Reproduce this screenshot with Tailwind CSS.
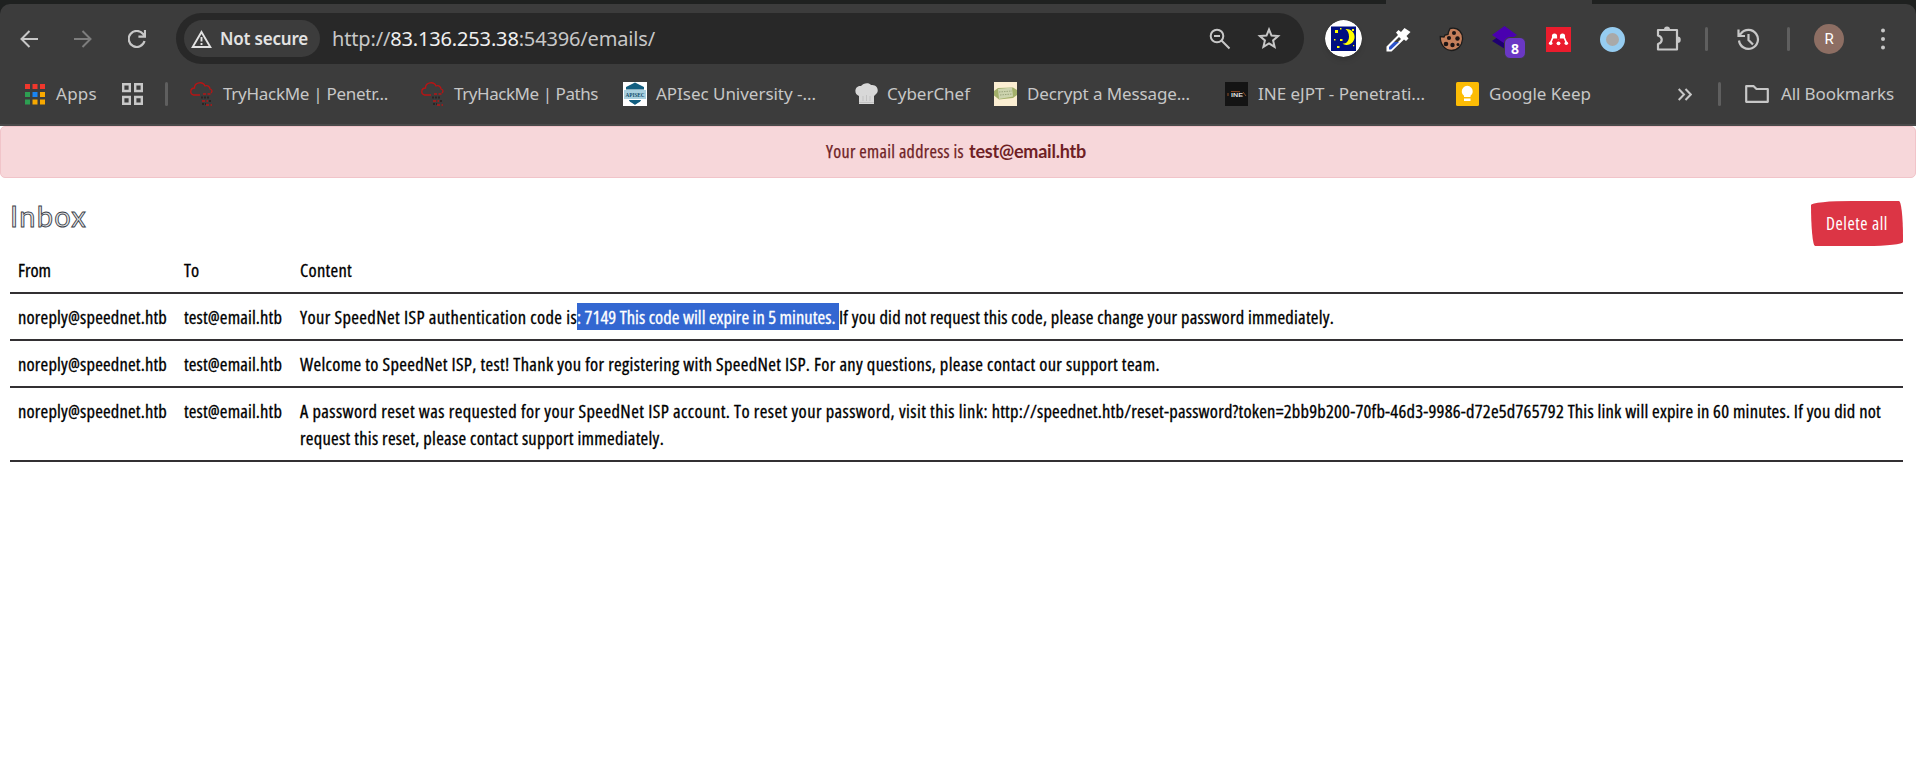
<!DOCTYPE html>
<html lang="en">
<head>
<meta charset="utf-8">
<title>Inbox</title>
<script src="https://cdn.jsdelivr.net/npm/@tailwindcss/browser@4"></script>
</head>
<body class="bg-white h-[763px] overflow-hidden">
<header class="relative h-[126px] bg-[#1f2120] pt-1 font-['Noto_Sans','Open_Sans',sans-serif] text-[#c7c7c7]">
  <div class="absolute left-[1386px] top-0 w-[206px] h-1 bg-[#3c3c3c]"></div>
  <div class="h-[122px] bg-[#3c3c3c] rounded-t-[10px] border-b-2 border-[#4a4a4a] pt-[9px]">
    <!-- Toolbar -->
    <div class="flex items-center h-[51px] pt-px">
      <svg class="ml-[20px] w-[18px] h-[18px] flex-none" viewBox="0 0 18 18" fill="none" stroke="#c7c7c7" stroke-width="2"><path d="M18 9H1.5M9.5 1 1.5 9l8 8"/></svg>
      <svg class="ml-[36px] w-[18px] h-[18px] flex-none" viewBox="0 0 18 18" fill="none" stroke="#7d7d7d" stroke-width="2"><path d="M0 9h16.500M8.500 1l8 8-8 8"/></svg>
      <svg class="ml-[36px] w-[18px] h-[18px] flex-none" viewBox="0 0 18 18" fill="none" stroke="#c7c7c7" stroke-width="2.200"><path d="M16.500 11A8 8 0 1 1 15.200 4.200L17 6.500M17 0v6.600h-6.600"/></svg>
      <div class="ml-[30px] flex items-center w-[1128px] h-[51px] rounded-full bg-[#282828] flex-none -mt-px">
        <div class="ml-2 flex items-center w-[136px] h-[37px] rounded-full bg-[#3c3c3c] flex-none">
          <svg class="ml-[7px] w-[21px] h-[18px] flex-none" viewBox="0 0 21 18" fill="none" stroke="#e3e3e3" stroke-width="1.900"><path d="M10.500 2 19.300 17H1.700z"/><path d="M10.500 7v4.500M10.500 13v2"/></svg>
          <span data-w="88" class="ml-[8px] whitespace-nowrap text-[17px] font-semibold text-[#e3e3e3]">Not secure</span>
        </div>
        <span data-w="323" class="ml-[12px] whitespace-nowrap text-[20px] text-[#c7c7c7]">http://<b class="font-normal text-[#f0f0f0]">83.136.253.38</b>:54396/emails/</span>
        <svg class="ml-auto w-[22px] h-[22px] flex-none" viewBox="0 0 22 22" fill="none" stroke="#c7c7c7" stroke-width="2"><circle cx="8" cy="8" r="6.300"/><path d="M5 8h6M12.500 12.500l8 8"/></svg>
        <svg class="ml-[26px] mr-[23px] w-[24px] h-[23px] flex-none" viewBox="0 0 24 23" fill="none" stroke="#c7c7c7" stroke-width="2"><path d="M12 2.500l2.500 6.100 6.600.500-5 4.300 1.500 6.500-5.600-3.500-5.600 3.500 1.500-6.500-5-4.300 6.600-.500z"/></svg>
      </div>
      <svg class="ml-[21px] w-[37px] h-[37px] flex-none rounded-full shadow-md -mt-px" viewBox="0 0 37 37"><circle cx="18.500" cy="18.500" r="18.500" fill="#fff"/><path fill="#000f80" d="M6 6.500h25v24.500H6z"/><path fill="#ff0" d="M21.500 10.500a8 8 0 1 1-3 14.800c4 0 6.500-2.800 6.500-7 0-3.500-1.200-6-3.500-7.800z" transform="translate(-1 -1.500)"/><path fill="#ff0" d="M10 10h3v3h-3zM9 19h1.500v1.500H9zM15 19h2.500v2H15zM15 8h1.500v1.500H15zM27 9h2v2h-2zM28 25h1.200v1.200H28zM12 26h2.500v2H12z"/></svg>
      <svg class="ml-[24px] w-[25px] h-[25px] flex-none" viewBox="0 0 25 25"><path fill="#fff" d="M.5 24.500v-5L12 8l-2-2.500L12.500 3l2.500 2 3.500-4L24.500 5l-4 4 2 2.500L20 14l-2-1.500L5.500 24.500z"/><path fill="#3c3c3c" d="M13 10l2 2-3 3H8z"/><path fill="#2b52c8" d="M8 15h5l-8 7.500H3V20z"/></svg>
      <svg class="ml-[28px] w-[25px] h-[25px] flex-none" viewBox="0 0 25 25"><path fill="#c57f5b" stroke="#1c1c1c" stroke-width="1.300" d="M11 1.500c9-2 13 5 12.500 11-.5 6-5 11-11 11S1 18 1.300 9.500L5 10l1-2 3-.500.500-2.500z"/><g fill="#1c1414"><circle cx="15" cy="6" r="2"/><circle cx="10" cy="11" r="2.100"/><circle cx="18.500" cy="11.500" r="2.200"/><circle cx="7" cy="17" r="2.300"/><circle cx="13.500" cy="18" r="2.200"/><circle cx="19" cy="17.500" r="1.500"/></g></svg>
      <div class="relative ml-[28px] w-[35px] h-[35px] flex-none mt-[8px]">
        <svg class="w-[26px] h-[24px]" viewBox="0 0 26 24"><path fill="#1f0070" d="M13 6l12 9-12 8L0 15z"/><path fill="#4a00b0" d="M12.500 0L25 9l-12.500 8.500L0 9z"/></svg>
        <span class="absolute left-[12px] top-[11px] w-[22px] h-[22px] rounded-[6px] bg-[#6a38c4] border border-[#3c3c3c] text-white text-[14px] leading-[21px] font-bold text-center">8</span>
      </div>
      <svg class="ml-[19px] w-[25px] h-[25px] flex-none" viewBox="0 0 25 25"><path fill="#eb1c2d" d="M0 0h25v25H0z"/><g fill="#fff"><circle cx="8.500" cy="9" r="2.600"/><circle cx="16.500" cy="9" r="2.600"/><circle cx="4.700" cy="16.300" r="1.800"/><circle cx="12.500" cy="16.300" r="1.900"/><circle cx="20.300" cy="16.300" r="1.800"/></g><path fill="none" stroke="#fff" stroke-width="1.700" d="M4.500 16L7.500 9l5 2.500L17.500 9l3 7"/><circle cx="12.500" cy="11" r="1.600" fill="#eb1c2d"/></svg>
      <div class="ml-[29px] w-[25px] h-[25px] flex-none rounded-full bg-[#a9a9a9] border-[6px] border-[#96ccf0]"></div>
      <svg class="ml-[31px] w-[25px] h-[25px] flex-none -mt-px" viewBox="0 0 25 25"><path fill="none" stroke="#c7c7c7" stroke-width="2.200" stroke-linejoin="round" d="M2 4h19v19.500H2v-5.500c5-1.500 5-7 0-8.500z"/><path fill="#c7c7c7" d="M8 3.500a3 3 0 0 1 6 0zM21.500 10.500a3 3 0 0 1 0 6.500z"/></svg>
      <div class="ml-[24px] w-[3px] h-6 rounded bg-[#5f5f5f] flex-none"></div>
      <svg class="ml-[29px] w-[23px] h-[23px] flex-none" viewBox="0 0 23 23" fill="none" stroke="#c7c7c7" stroke-width="2.200"><path d="M2 12.500A9.500 9.500 0 1 0 4 5.500L1.500 8M1.500 1.500V8H8M11.500 6v6l4.500 4.500"/></svg>
      <div class="ml-[27px] w-[3px] h-6 rounded bg-[#5f5f5f] flex-none"></div>
      <div class="ml-[24px] w-[30px] h-[30px] rounded-full bg-[#8d6e63] text-white text-[15px] leading-[30px] text-center font-['Roboto',sans-serif] flex-none">R</div>
      <svg class="ml-[37px] w-[4px] h-[22px] flex-none" viewBox="0 0 4 22" fill="#c7c7c7"><circle cx="2" cy="2.500" r="2"/><circle cx="2" cy="11" r="2"/><circle cx="2" cy="19.500" r="2"/></svg>
    </div>
    <!-- Bookmarks bar -->
    <div class="flex items-center h-[60px] text-[17px] whitespace-nowrap [&>*]:flex-none">
      <svg class="ml-[25px] w-[20px] h-[21px]" viewBox="0 0 20 21"><path fill="#f0372c" d="M0 0h5v5H0zM7.500 0h5v5h-5zM15 0h5v5h-5z"/><path fill="#2d9f52" d="M0 8h5v5H0zM0 15.500h5v5H0z"/><path fill="#1a84f2" d="M7.500 8h5v5h-5z"/><path fill="#f8a800" d="M15 8h5v5h-5zM7.500 15.500h5v5h-5zM15 15.500h5v5h-5z"/></svg>
      <span data-w="41" class="ml-[11px]">Apps</span>
      <svg class="ml-[25px] w-[21px] h-[22px]" viewBox="0 0 21 22" fill="none" stroke="#c7c7c7" stroke-width="2.400"><path d="M1.200 1.200h6.600v6.800H1.200zM13.200 1.200h6.600v6.800h-6.600zM1.200 14h6.600v6.800H1.200zM13.200 14h6.600v6.800h-6.600z"/></svg>
      <div class="ml-[22px] w-[3px] h-6 rounded bg-[#5f5f5f]"></div>
      <svg class="ml-[22px] w-[24px] h-[24px]" viewBox="0 0 24 24" fill="none" stroke="#b81414" stroke-width="1.300"><path d="M10 13H3.500C-.5 12 0 6 4.500 6 4.500 0 13-1 15 4c3-1 5 1 5 3 3 1 2 3 1 4"/><path stroke-width="1.500" stroke-dasharray="3 1.500" d="M13 12h9M12 19h6M16 23h6"/><path stroke="#2b2525" stroke-width="1.800" stroke-dasharray="2 1" d="M11 15.500h9M19 19h3M12 22h4"/></svg>
      <span data-w="165" class="ml-[9px]">TryHackMe | Penetr...</span>
      <svg class="ml-[33px] w-[24px] h-[24px]" viewBox="0 0 24 24" fill="none" stroke="#b81414" stroke-width="1.300"><path d="M10 13H3.500C-.5 12 0 6 4.500 6 4.500 0 13-1 15 4c3-1 5 1 5 3 3 1 2 3 1 4"/><path stroke-width="1.500" stroke-dasharray="3 1.500" d="M13 12h9M12 19h6M16 23h6"/><path stroke="#2b2525" stroke-width="1.800" stroke-dasharray="2 1" d="M11 15.500h9M19 19h3M12 22h4"/></svg>
      <span data-w="144" class="ml-[9px]">TryHackMe | Paths</span>
      <svg class="ml-[25px] w-[24px] h-[24px]" viewBox="0 0 24 24"><path fill="#fff" d="M0 0h24v24H0z"/><path fill="#125e80" d="M12 .5l9 4.500v2.500H3V5zM6 18h12c0 2-4 3-6 5-2-2-6-3-6-5z"/><path fill="#a9d0df" d="M1 8h22v9H1z"/><text x="12" y="15" font-family="Liberation Serif" font-weight="bold" font-size="6.500" text-anchor="middle" fill="#0f4d6b" textLength="19" lengthAdjust="spacingAndGlyphs">APISEC</text></svg>
      <span data-w="160" class="ml-[9px]">APIsec University -...</span>
      <svg class="ml-[39px] w-[23px] h-[22px]" viewBox="0 0 23 22"><path fill="#d8d8d8" d="M4 21V13C-2 11 0 2 6 3c2-3 8-4 10-1 6-1 8 5 6 8l-3 3v8z"/><path fill="none" stroke="#c2c2c2" d="M8 13v5M11.500 12v6M15 13v5M4 19.500h15"/></svg>
      <span data-w="83" class="ml-[9px]">CyberChef</span>
      <svg class="ml-[24px] w-[23px] h-[24px]" viewBox="0 0 23 24"><path fill="#fbeed2" d="M0 0h23v24H0z"/><path fill="#a3b06a" d="M0 9l4-3 15-.500 4 2.500v5l-4 3-14 1.500-5-4z"/><path fill="#ccd3ad" d="M4 7l14-1.500 1 9L5 17z"/><path stroke="#8d9870" stroke-width=".8" stroke-dasharray="1.500 1" d="M5 10l13-1M6 13l12-1"/></svg>
      <span data-w="163" class="ml-[10px]">Decrypt a Message...</span>
      <svg class="ml-[35px] w-[23px] h-[24px]" viewBox="0 0 23 24"><path fill="#141414" d="M0 0h23v24H0z"/><text x="12" y="14.500" font-family="Liberation Sans" font-weight="bold" font-size="6" text-anchor="middle" fill="#ddd" textLength="12" lengthAdjust="spacingAndGlyphs">INE</text><path fill="none" stroke="#8a4a25" d="M3 14V11M6 9.500l9 .200M18 10l3 4"/></svg>
      <span data-w="167" class="ml-[10px]">INE eJPT - Penetrati...</span>
      <svg class="ml-[31px] w-[23px] h-[24px]" viewBox="0 0 23 24"><rect width="23" height="24" rx="1.500" fill="#fcbc05"/><path fill="#fff" d="M8 15v-1.200a5.500 5.500 0 1 1 6.500 0V15zM8 16.500h6.500V19H8z"/></svg>
      <span data-w="102" class="ml-[10px]">Google Keep</span>
      <svg class="ml-[87px] w-[14px] h-[13px]" viewBox="0 0 14 13" fill="none" stroke="#c7c7c7" stroke-width="2"><path d="M.7 1l5.300 5.500L.7 12M7.500 1l5.300 5.500L7.500 12"/></svg>
      <div class="ml-[26px] w-[3px] h-6 rounded bg-[#5f5f5f]"></div>
      <svg class="ml-[24px] w-[24px] h-[18px]" viewBox="0 0 24 18" fill="none" stroke="#c7c7c7" stroke-width="2.200" stroke-linejoin="round"><path d="M1.200 1.200h7.500l2.800 2.800h11.300v12.800H1.200z"/></svg>
      <span data-w="113" class="ml-[12px]">All Bookmarks</span>
    </div>
  </div>
</header>

<main class="font-['Open_Sans','Noto_Sans',sans-serif] text-black">
  <div class="h-[52px] rounded-[5px] border border-[#f1c4c9] bg-[#f7d7da] text-[#6f1f26] flex pl-[825px] pb-px items-center text-[18px] whitespace-nowrap">
    <span data-w="138" class="font-stretch-condensed [-webkit-text-stroke:.25px]">Your email address is</span>
    <b data-w="117" class="ml-[5px] font-bold font-['Lato',sans-serif]">test@email.htb</b>
  </div>
  <div class="flex justify-between items-start pl-[10px] pr-[13px] mt-[23px] h-[45px]">
    <h2 data-w="77" class="-mt-[2px] text-[29px] leading-[33px] font-['Lato',sans-serif] whitespace-nowrap text-[#e4e6e8] [-webkit-text-stroke:.9px_#3a4048]">Inbox</h2>
    <button class="w-[92px] h-[45px] pb-px bg-[#dc3545] text-white text-[17.500px] flex justify-center items-center rounded-[255px_25px_225px_25px/25px_225px_25px_255px] whitespace-nowrap"><span data-w="62" class="font-stretch-condensed">Delete all</span></button>
  </div>
  <table class="ml-[10px] w-[1893px] table-fixed border-collapse font-stretch-condensed text-[18.500px] leading-[27px] [-webkit-text-stroke:.3px] whitespace-nowrap text-left [&_td]:p-0 [&_td]:pl-2 [&_td]:py-[9px] [&_td]:align-top [&_th]:font-normal [&_th]:pl-2 [&_th]:pt-[10px] [&_th]:pb-[9px] [&_tr]:border-b-2 [&_tr]:border-[#333033]">
    <colgroup><col class="w-[166px]"><col class="w-[116px]"><col></colgroup>
    <thead><tr><th><span data-w="33">From</span></th><th><span data-w="15">To</span></th><th><span data-w="52">Content</span></th></tr></thead>
    <tbody>
      <tr><td><span data-w="149">noreply@speednet.htb</span></td><td><span data-w="98">test@email.htb</span></td><td class="flex"><span data-w="277">Your SpeedNet ISP authentication code is</span><span data-w="262" class="bg-[#3367d1] text-white font-medium whitespace-pre">: 7149 This code will expire in 5 minutes. </span><span data-w="495">If you did not request this code, please change your password immediately.</span></td></tr>
      <tr><td><span data-w="149">noreply@speednet.htb</span></td><td><span data-w="98">test@email.htb</span></td><td><span data-w="860">Welcome to SpeedNet ISP, test! Thank you for registering with SpeedNet ISP. For any questions, please contact our support team.</span></td></tr>
      <tr><td><span data-w="149">noreply@speednet.htb</span></td><td><span data-w="98">test@email.htb</span></td><td><span data-w="688">A password reset was requested for your SpeedNet ISP account. To reset your password, visit this link:</span><span data-w="893" class="whitespace-pre"> http://speednet.htb/reset-password?token=2bb9b200-70fb-46d3-9986-d72e5d765792 This link will expire in 60 minutes. If you did not</span><br><span data-w="364">request this reset, please contact support immediately.</span></td></tr>
    </tbody>
  </table>
</main>
<script>
// Track each label so that it fills its measure, once styles are in place.
function track() {
  document.querySelectorAll('[data-w]').forEach(function (el) {
    el.style.letterSpacing = '0px';
    var range = document.createRange();
    range.selectNodeContents(el);
    var w = range.getBoundingClientRect().width;
    el.style.letterSpacing = ((+el.dataset.w - w) / el.textContent.length) + 'px';
  });
}
track();
window.addEventListener('load', function () {
  track();
  document.fonts.ready.then(track);
  requestAnimationFrame(track);
});
</script>
</body>
</html>
